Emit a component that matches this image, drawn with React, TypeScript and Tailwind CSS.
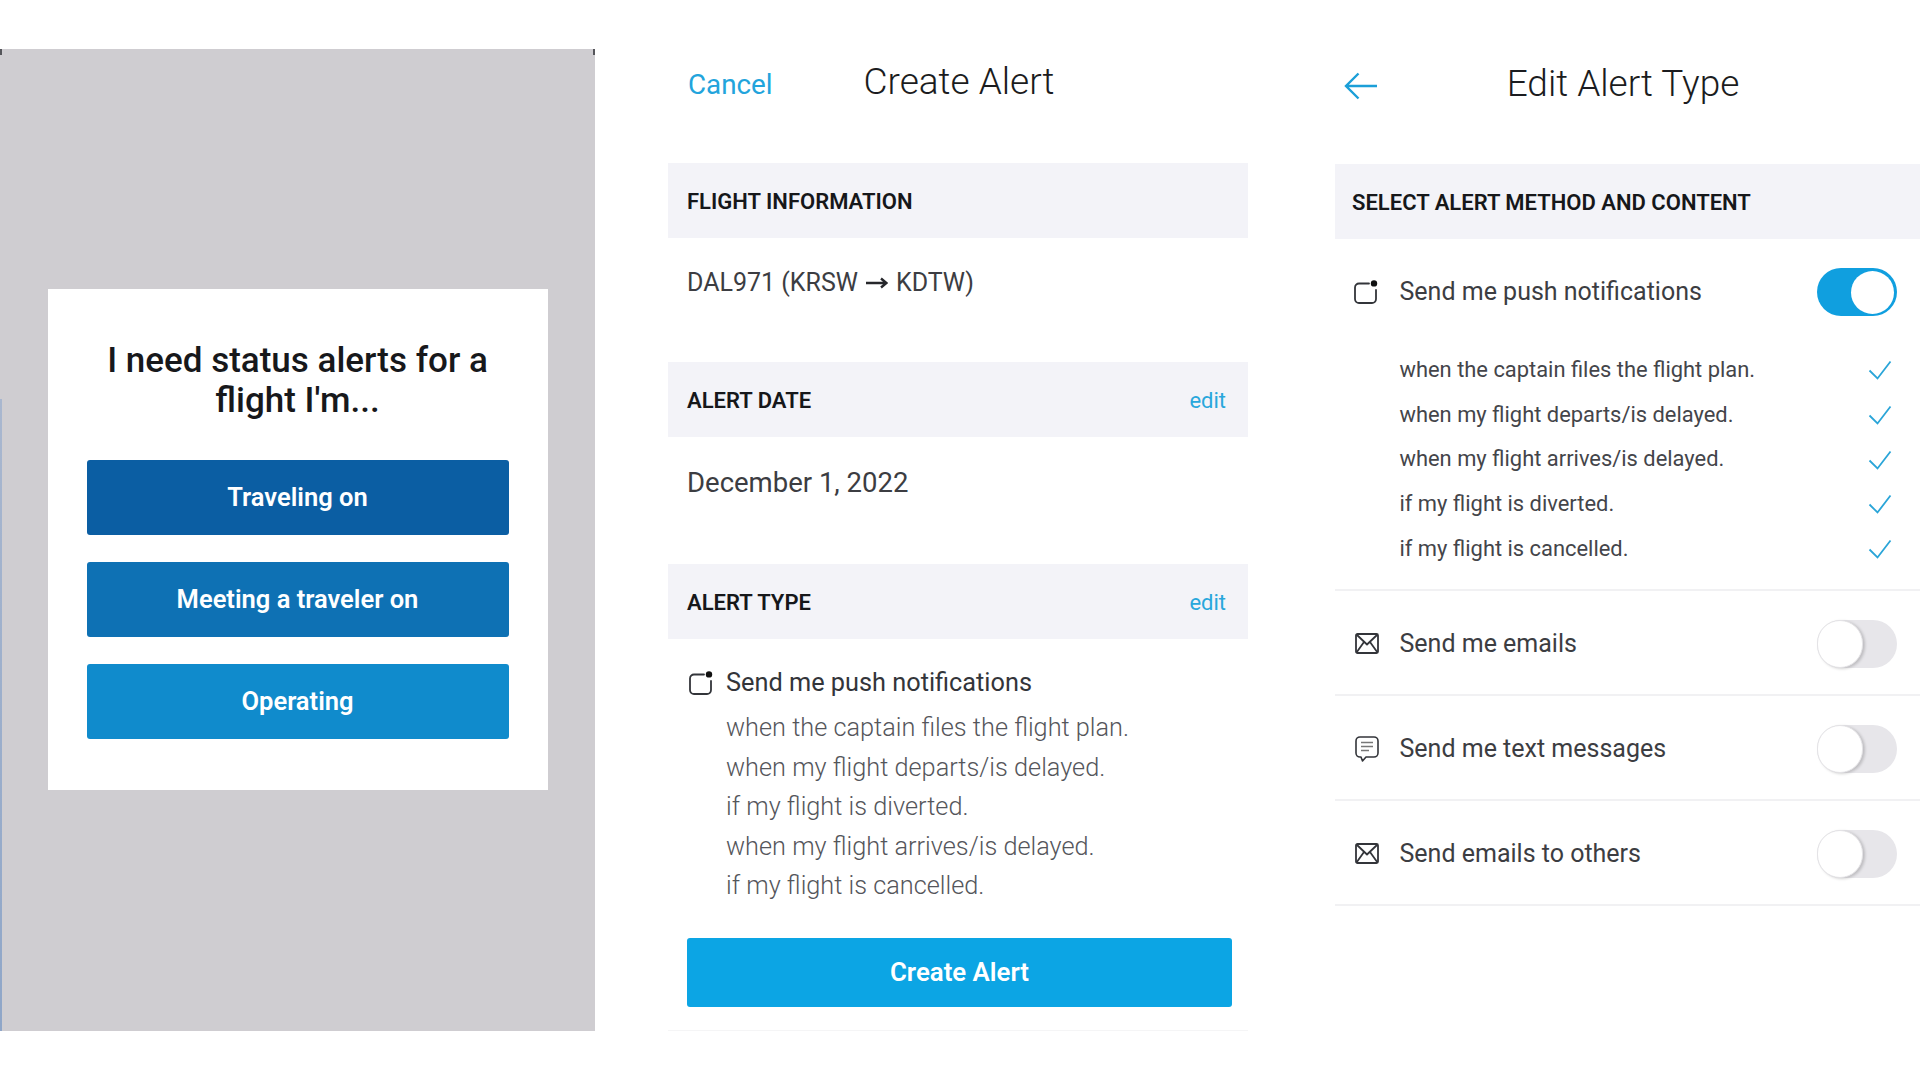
import React from 'react';

const pushOptions = [
  'when the captain files the flight plan.',
  'when my flight departs/is delayed.',
  'when my flight arrives/is delayed.',
  'if my flight is diverted.',
  'if my flight is cancelled.',
];

const summaryOptions = [
  'when the captain files the flight plan.',
  'when my flight departs/is delayed.',
  'if my flight is diverted.',
  'when my flight arrives/is delayed.',
  'if my flight is cancelled.',
];

function PushIcon() {
  return (
    <svg viewBox="0 0 24 24" fill="none" stroke="#33353a" strokeWidth="1.8" strokeLinecap="round" className="w-[24px] h-[24px] shrink-0">
      <path d="M15 3.5H5a4 4 0 0 0-4 4V19a4 4 0 0 0 4 4h13a4 4 0 0 0 4-4V10" />
      <circle cx="20" cy="3.4" r="3.2" fill="#111" stroke="none" />
    </svg>
  );
}

function MailIcon() {
  return (
    <svg viewBox="0 0 24 21" fill="none" stroke="#33353a" strokeWidth="1.8" strokeLinejoin="round" className="w-[24px] h-[21px] shrink-0">
      <rect x="1" y="1" width="22" height="19" rx="1.5" />
      <path d="M1.5 1.5L12 11.5 22.5 1.5M1.5 19.5L9 9M22.5 19.5L15 9" />
    </svg>
  );
}

function MessageIcon() {
  return (
    <svg viewBox="0 0 24 26" fill="none" stroke="#33353a" strokeWidth="1.6" strokeLinejoin="round" className="w-[24px] h-[26px] shrink-0">
      <path d="M5 1h14a4 4 0 0 1 4 4v12a4 4 0 0 1-4 4h-8l-3.5 4L6 21H5a4 4 0 0 1-4-4V5a4 4 0 0 1 4-4z" />
      <path d="M6 6.5h12M6 10.5h12M6 14.5h8" strokeWidth="1.4" stroke="#777" />
    </svg>
  );
}

function CheckIcon() {
  return (
    <svg viewBox="0 0 24 20" fill="none" stroke="#2aa5d8" strokeWidth="1.8" className="w-[24px] h-[20px] shrink-0">
      <path d="M1.5 10.5l8 8L22.5 1.5" />
    </svg>
  );
}

function Toggle({ on }: { on?: boolean }) {
  return on ? (
    <div className="w-[80px] h-[48px] rounded-full bg-[#109fdf] flex items-center justify-end pr-[3px] shrink-0">
      <div className="w-[43px] h-[43px] rounded-full bg-white" />
    </div>
  ) : (
    <div className="w-[80px] h-[48px] rounded-full bg-[#e7e6ea] flex items-center shrink-0">
      <div className="w-[46px] h-[48px] rounded-full bg-white border border-[#e4e3e6] shadow-[2px_1px_3px_rgba(0,0,0,0.18)]" />
    </div>
  );
}

function SectionBar({ title, edit, className }: { title: string; edit?: boolean; className?: string }) {
  return (
    <div className={`h-[75px] bg-[#f3f3f8] flex items-center justify-between pt-[2px] text-[22px] font-semibold text-[#16171a] ${className ?? ''}`}>
      <span>{title}</span>
      {edit && <span className="text-[22px] font-normal text-[#29a7dc] pr-[2px]">edit</span>}
    </div>
  );
}

function MethodRow({ icon, label }: { icon: React.ReactNode; label: string }) {
  return (
    <div className="h-[105px] border-b-2 border-[#f1f1f3] flex items-center justify-between pl-[19px] pr-[23px] pt-[2px]">
      <div className="flex items-center gap-[20.5px] text-[25px] text-[#3c3d42]">
        <div className="w-[25px] flex justify-center">{icon}</div>
        <span>{label}</span>
      </div>
      <Toggle />
    </div>
  );
}

export default function App() {
  return (
    <div className="w-[1920px] h-[1080px] bg-white flex items-start pt-[49px] overflow-hidden font-['Roboto',sans-serif]">
      {/* Traveler type dialog */}
      <div className="relative w-[595px] h-[982px] bg-[#cfcdd1] flex items-center justify-center shrink-0">
        <div className="absolute left-0 top-[350px] bottom-0 w-[2px] bg-gradient-to-b from-[#a9b7cf] to-[#8fa6c8]" />
        <div className="absolute left-0 top-0 w-[2px] h-[6px] bg-[#55555a]" />
        <div className="absolute right-0 top-0 w-[2px] h-[6px] bg-[#55555a]" />
        <div className="w-[500px] h-[501px] mb-[2px] bg-white px-[39px] pt-[52px] flex flex-col">
          <div className="text-[35px] leading-[40.5px] font-medium text-[#17181b] text-center mb-[38px]">
            I need status alerts for a<br />flight I'm...
          </div>
          <div className="flex flex-col gap-[27px]">
            <div className="h-[75px] rounded-[3px] bg-[#0b5ea3] flex items-center justify-center text-white text-[25.5px] font-semibold">Traveling on</div>
            <div className="h-[75px] rounded-[3px] bg-[#0e71b4] flex items-center justify-center text-white text-[25.5px] font-semibold">Meeting a traveler on</div>
            <div className="h-[75px] rounded-[3px] bg-[#108bcc] flex items-center justify-center text-white text-[25.5px] font-semibold">Operating</div>
          </div>
        </div>
      </div>

      {/* Create alert */}
      <div className="ml-[73px] w-[580px] h-[982px] shrink-0 border-b border-[#f5f5f6]">
        <div className="relative h-[114px] flex justify-center pt-[5px] pl-[2px] text-[37px] font-light text-[#1b1c20]">
          <span className="absolute left-[20px] top-[15px] text-[27.8px] font-normal text-[#22a4dc]">Cancel</span>
          <span>Create Alert</span>
        </div>
        <SectionBar title="FLIGHT INFORMATION" className="px-[19px]" />
        <div className="h-[124px] px-[19px] pt-[26px] text-[25px] leading-[38px] text-[#3c3d42] flex items-start">
          DAL971 (KRSW
          <svg viewBox="0 0 22 12" fill="none" stroke="#26272b" strokeWidth="2.4" className="w-[22px] h-[12px] mx-[8px] mt-[13px] shrink-0">
            <path d="M0 6h20M15 1.5L20.5 6 15 10.5" />
          </svg>
          KDTW)
        </div>
        <SectionBar title="ALERT DATE" edit className="px-[19px] pr-[20px]" />
        <div className="h-[127px] px-[19px] pt-[27px] text-[27.5px] leading-[38px] text-[#3c3d42]">December 1, 2022</div>
        <SectionBar title="ALERT TYPE" edit className="px-[19px] pr-[20px]" />
        <div className="pl-[19px] pt-[26px]">
          <div className="flex items-center gap-[13px] h-[36px] text-[25.3px] leading-[36px] text-[#33353a]">
            <div className="ml-[2px]">
              <PushIcon />
            </div>
            <span>Send me push notifications</span>
          </div>
          <div className="pl-[39px] mt-[7px] text-[25.3px] leading-[39.6px] font-light text-[#55565b]">
            {summaryOptions.map((option) => (
              <div key={option}>{option}</div>
            ))}
          </div>
        </div>
        <div className="ml-[19px] w-[545px] h-[69px] mt-[32px] rounded-[3px] bg-[#0ca5e4] flex items-center justify-center text-white text-[25.8px] font-semibold">
          Create Alert
        </div>
      </div>

      {/* Edit alert type */}
      <div className="ml-[87px] w-[585px] shrink-0">
        <div className="relative h-[115px] flex justify-center pt-[7px] pr-[9px] text-[37px] font-light text-[#1b1c20]">
          <svg viewBox="0 0 34 28" fill="none" stroke="#1b9fd8" strokeWidth="2.4" className="absolute left-[9px] top-[23px] w-[34px] h-[28px]">
            <path d="M33 14H2M14.5 1.5L2 14l12.5 12.5" />
          </svg>
          <span>Edit Alert Type</span>
        </div>
        <SectionBar title="SELECT ALERT METHOD AND CONTENT" className="px-[17px]" />
        <div className="h-[352px] border-b-2 border-[#f1f1f3] pl-[19px] pr-[23px] pt-[29px]">
          <div className="flex items-center justify-between">
            <div className="flex items-center gap-[21.5px] text-[25px] text-[#3c3d42]">
              <PushIcon />
              <span>Send me push notifications</span>
            </div>
            <Toggle on />
          </div>
          <div className="mt-[32px] pl-[45.5px] pr-[5px] text-[21.9px] leading-[44.7px] text-[#44454a]">
            {pushOptions.map((option) => (
              <div key={option} className="flex items-center justify-between">
                <span>{option}</span>
                <CheckIcon />
              </div>
            ))}
          </div>
        </div>
        <MethodRow icon={<MailIcon />} label="Send me emails" />
        <MethodRow icon={<MessageIcon />} label="Send me text messages" />
        <MethodRow icon={<MailIcon />} label="Send emails to others" />
      </div>
    </div>
  );
}
